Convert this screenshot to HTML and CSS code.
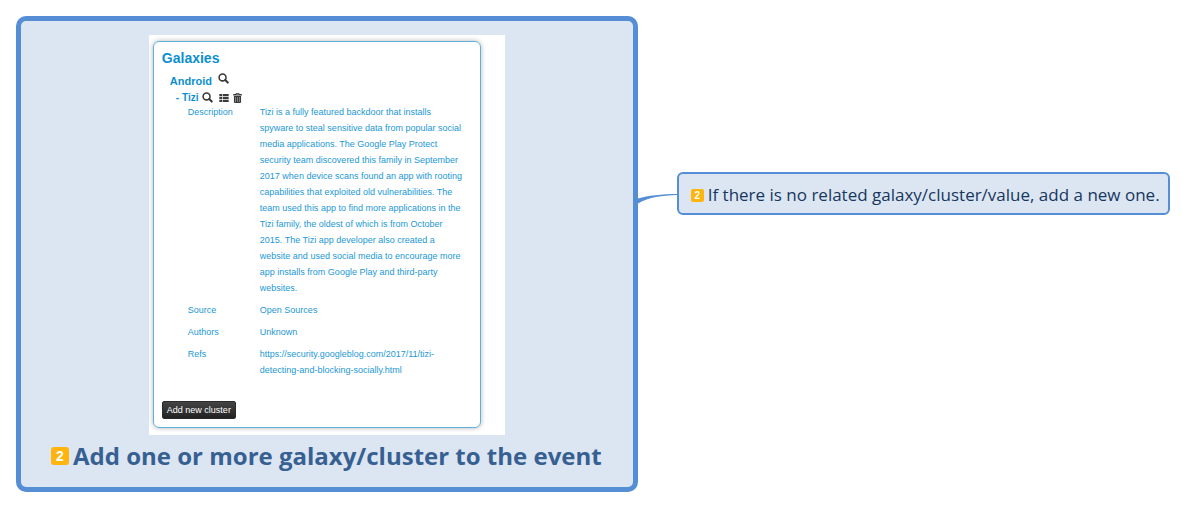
FILE: index.html
```
<!DOCTYPE html>
<html lang="en">
<head>
<meta charset="utf-8">
<meta name="viewport" content="width=device-width, initial-scale=1">
<title>Add galaxy/cluster to the event</title>
<link rel="stylesheet" href="styles.css">
</head>
<body>
<svg class="symbols" aria-hidden="true">
  <symbol id="search" viewBox="0 0 14 14"><circle cx="5.8" cy="5.6" r="4.4" fill="none" stroke="currentColor" stroke-width="2"/><path d="M9.200 9l3.200 3.200" stroke="currentColor" stroke-width="2.600" stroke-linecap="round"/></symbol>
  <symbol id="list" viewBox="0 0 14 12"><path fill="currentColor" d="M0 0h4v3.200H0zM5 0h9v3.200H5zM0 4.400h4v3.200H0zM5 4.400h9v3.200H5zM0 8.800h4V12H0zM5 8.800h9V12H5z"/></symbol>
  <symbol id="trash" viewBox="0 0 12 14"><path fill="currentColor" fill-rule="evenodd" d="M4 0h4l1 1.500h3v2H0v-2h3zM4.400 1l-.4.6h4l-.4-.6zM1 4.200h10V13l-1 1H2l-1-1zM3 5.500v7h.5v-7zM5.700 5.500v7h.5v-7zM8.400 5.500v7h.5v-7z"/></symbol>
</svg>
<main class="map">
  <section class="topic">
    <div class="shot">
      <article class="panel">
        <h2 class="panel-title">Galaxies</h2>
        <h3 class="galaxy">Android <button class="icon" aria-label="View galaxy"><svg><use href="#search"/></svg></button></h3>
        <h4 class="cluster"><span>- Tizi</span>
          <button class="icon" aria-label="View cluster"><svg><use href="#search"/></svg></button>
          <button class="icon list" aria-label="List events"><svg><use href="#list"/></svg></button>
          <button class="icon trash" aria-label="Delete cluster"><svg><use href="#trash"/></svg></button>
        </h4>
        <dl class="details">
          <dt>Description</dt>
          <dd>Tizi is a fully featured backdoor that installs spyware to steal sensitive data from popular social media applications. The Google Play Protect security team discovered this family in September 2017 when device scans found an app with rooting capabilities that exploited old vulnerabilities. The team used this app to find more applications in the Tizi family, the oldest of which is from October 2015. The Tizi app developer also created a website and used social media to encourage more app installs from Google Play and third-party websites.</dd>
          <dt>Source</dt><dd>Open Sources</dd>
          <dt>Authors</dt><dd>Unknown</dd>
          <dt>Refs</dt><dd><a href="https://security.googleblog.com/2017/11/tizi-detecting-and-blocking-socially.html">https://security.googleblog.com/2017/11/tizi-detecting-and-blocking-socially.html</a></dd>
        </dl>
        <button class="add">Add new cluster</button>
      </article>
    </div>
    <h1 class="topic-title"><span class="badge">2</span>Add one or more galaxy/cluster to the event</h1>
  </section>
  <svg class="link" viewBox="0 0 39 12" preserveAspectRatio="none" aria-hidden="true"><path fill="#558ed5" d="M0 4.500C10 1.500 24 0 39 0V1C24 1.500 11 3 0 9.500z"/></svg>
  <section class="subtopic"><span class="badge small">2</span><span>If there is no related galaxy/cluster/value, add a new one.</span></section>
</main>
</body>
</html>
```
FILE: styles.css
```
* { box-sizing: border-box; }
body { margin: 0; background: #fff; font-family: "Open Sans", sans-serif; }
h1, h2, h3, h4, dl, dd { margin: 0; }
.symbols { position: absolute; width: 0; height: 0; }
.map { display: flex; align-items: flex-start; padding: 16px 8px 16px 16px; }
.topic {
  flex: none;
  padding: 14px 30px 15px;
  border: 5px solid #558ed5;
  border-radius: 10px;
  background: #dce6f2;
}
.shot {
  width: 356px;
  margin: 0 auto;
  padding: 6px 24px 7px 4px;
  background: #fff;
  font-family: "Liberation Sans", Arial, sans-serif;
  color: #0d8fd0;
}
.panel {
  padding: 7px 8px 8px;
  border: 1px solid #5fb0da;
  border-radius: 6px;
  box-shadow: 0 0 5px rgba(0, 0, 0, .3);
}
.panel-title { font-size: 14px; line-height: 18px; }
.galaxy {
  display: flex;
  align-items: flex-start;
  gap: 6px;
  padding: 6px 0 0 8px;
  font-size: 11px;
  line-height: 16px;
}
.cluster {
  display: flex;
  align-items: center;
  padding: 2px 0 0 14px;
  gap: 4px;
  font-size: 10px;
  line-height: 13px;
}
.icon { padding: 0; border: 0; background: none; color: #3a3a3a; width: 11px; height: 11px; }
.icon svg { display: block; width: 100%; height: 100%; }
.icon.list { width: 10px; height: 8px; margin-left: 2px; }
.icon.trash { width: 9px; height: 10px; }
.details {
  display: grid;
  grid-template-columns: 72px 204px;
  row-gap: 6px;
  padding-left: 26px;
  color: #1c98d6;
  font-size: 9px;
  line-height: 16px;
}
.details a { color: inherit; text-decoration: none; }
.add {
  display: block;
  margin-top: 23px;
  padding: 0 4px;
  border: 1px solid #2a2a2a;
  border-radius: 2px;
  background: linear-gradient(#444, #222);
  color: #fff;
  font-family: inherit;
  font-size: 9px;
  line-height: 16px;
}
.topic-title {
  display: flex;
  align-items: center;
  gap: 4px;
  padding: 5px 1px 0 0;
  color: #376092;
  font-size: 24px;
  line-height: 32px;
}
.badge {
  flex: none;
  width: 18px;
  height: 18px;
  border-radius: 3px;
  background: #ffb50d;
  color: #fff;
  font: bold 14px/18px "Liberation Sans", Arial, sans-serif;
  text-align: center;
}
.badge.small { width: 13px; height: 13px; border-radius: 2px; font-size: 10px; line-height: 13px; }
.link { flex: none; width: 39px; height: 12px; margin-top: 178px; }
.subtopic {
  display: flex;
  align-items: center;
  gap: 4px;
  margin-top: 156px;
  padding: 10px 8px 7px 12px;
  border: 2px solid #558ed5;
  border-radius: 6px;
  background: #dce6f2;
  color: #17375e;
  font-size: 17px;
  line-height: 22px;
}
```
